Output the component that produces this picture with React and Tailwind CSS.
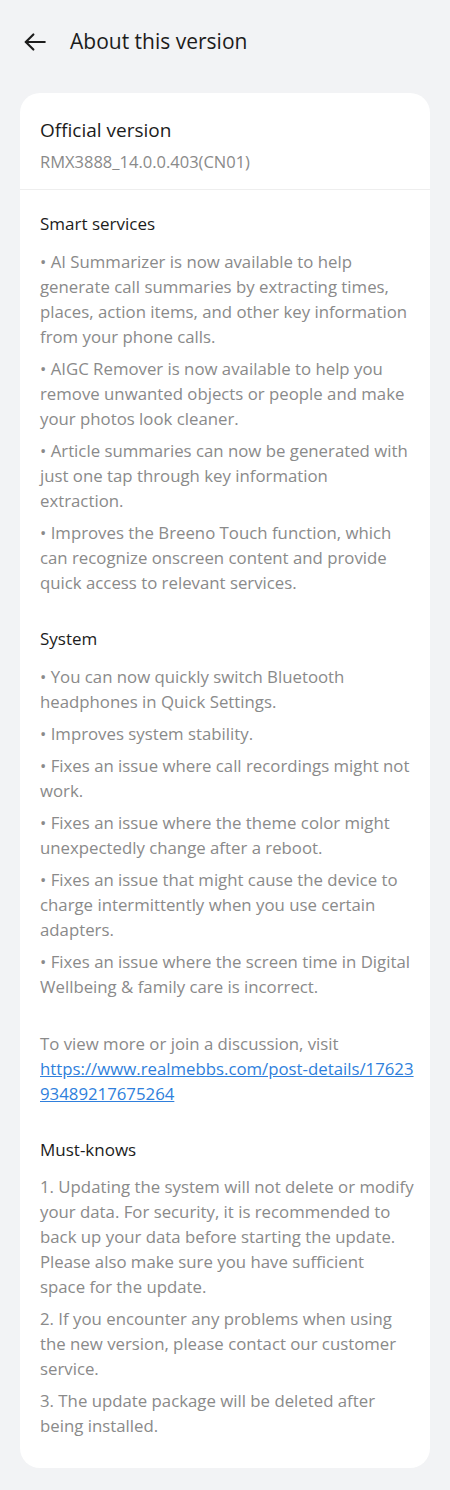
import React from "react";

const font = { fontFamily: "'Open Sans', 'Noto Sans', sans-serif" };

function Para({ lines, first }) {
  return (
    <p className={`${first ? "" : "mt-[7px]"} text-[16.8px] leading-[25px] text-[#8a8a8a]`}>
      {lines.map((l, i) => (
        <span key={i} className="block whitespace-nowrap">{l}</span>
      ))}
    </p>
  );
}

function Title({ children, className = "" }) {
  return <h2 className={`text-[17px] leading-[25px] text-[#1c1c1c] ${className}`}>{children}</h2>;
}

export default function App() {
  return (
    <div className="min-h-[1490px] w-[450px] bg-[#f2f3f5]" style={font}>
      <div className="flex h-[84px] items-center pl-[22px]">
        <svg width="26" height="26" viewBox="0 0 24 24" fill="none" stroke="#1c1c1c" strokeWidth="2" strokeLinecap="round" strokeLinejoin="round">
          <path d="M21 12H3.5" />
          <path d="M10.5 5L3.5 12l7 7" />
        </svg>
        <h1 className="ml-[22px] text-[21px] text-[#1c1c1c]">About this version</h1>
      </div>
      <div className="mx-[20px] mt-[9px] rounded-[20px] bg-white">
        <div className="px-[20px] pb-[16px] pt-[24px]">
          <div className="text-[19px] leading-[27px] text-[#1c1c1c]">Official version</div>
          <div className="mt-[7px] text-[16.5px] leading-[22px] text-[#8a8a8a]">RMX3888_14.0.0.403(CN01)</div>
        </div>
        <div className="h-px bg-[#eeeeee]" />
        <div className="px-[20px] pt-[21px] pb-[30px]">
          <Title>Smart services</Title>
          <div className="mt-[13px]">
            <Para first lines={["• AI Summarizer is now available to help", "generate call summaries by extracting times,", "places, action items, and other key information", "from your phone calls."]} />
            <Para lines={["• AIGC Remover is now available to help you", "remove unwanted objects or people and make", "your photos look cleaner."]} />
            <Para lines={["• Article summaries can now be generated with", "just one tap through key information", "extraction."]} />
            <Para lines={["• Improves the Breeno Touch function, which", "can recognize onscreen content and provide", "quick access to relevant services."]} />
          </div>
          <Title className="mt-[31px]">System</Title>
          <div className="mt-[13px]">
            <Para first lines={["• You can now quickly switch Bluetooth", "headphones in Quick Settings."]} />
            <Para lines={["• Improves system stability."]} />
            <Para lines={["• Fixes an issue where call recordings might not", "work."]} />
            <Para lines={["• Fixes an issue where the theme color might", "unexpectedly change after a reboot."]} />
            <Para lines={["• Fixes an issue that might cause the device to", "charge intermittently when you use certain", "adapters."]} />
            <Para lines={["• Fixes an issue where the screen time in Digital", "Wellbeing & family care is incorrect."]} />
          </div>
          <p className="mt-[32px] text-[16.8px] leading-[25px] text-[#8a8a8a]">
            <span className="block">To view more or join a discussion, visit</span>
            <a href="#" className="text-[#2f7fdc] underline">
              <span className="block whitespace-nowrap">https://www.realmebbs.com/post-details/17623</span>
              <span className="block">93489217675264</span>
            </a>
          </p>
          <Title className="mt-[31px]">Must-knows</Title>
          <div className="mt-[12px]">
            <Para first lines={["1. Updating the system will not delete or modify", "your data. For security, it is recommended to", "back up your data before starting the update.", "Please also make sure you have sufficient", "space for the update."]} />
            <Para lines={["2. If you encounter any problems when using", "the new version, please contact our customer", "service."]} />
            <Para lines={["3. The update package will be deleted after", "being installed."]} />
          </div>
        </div>
      </div>
    </div>
  );
}
